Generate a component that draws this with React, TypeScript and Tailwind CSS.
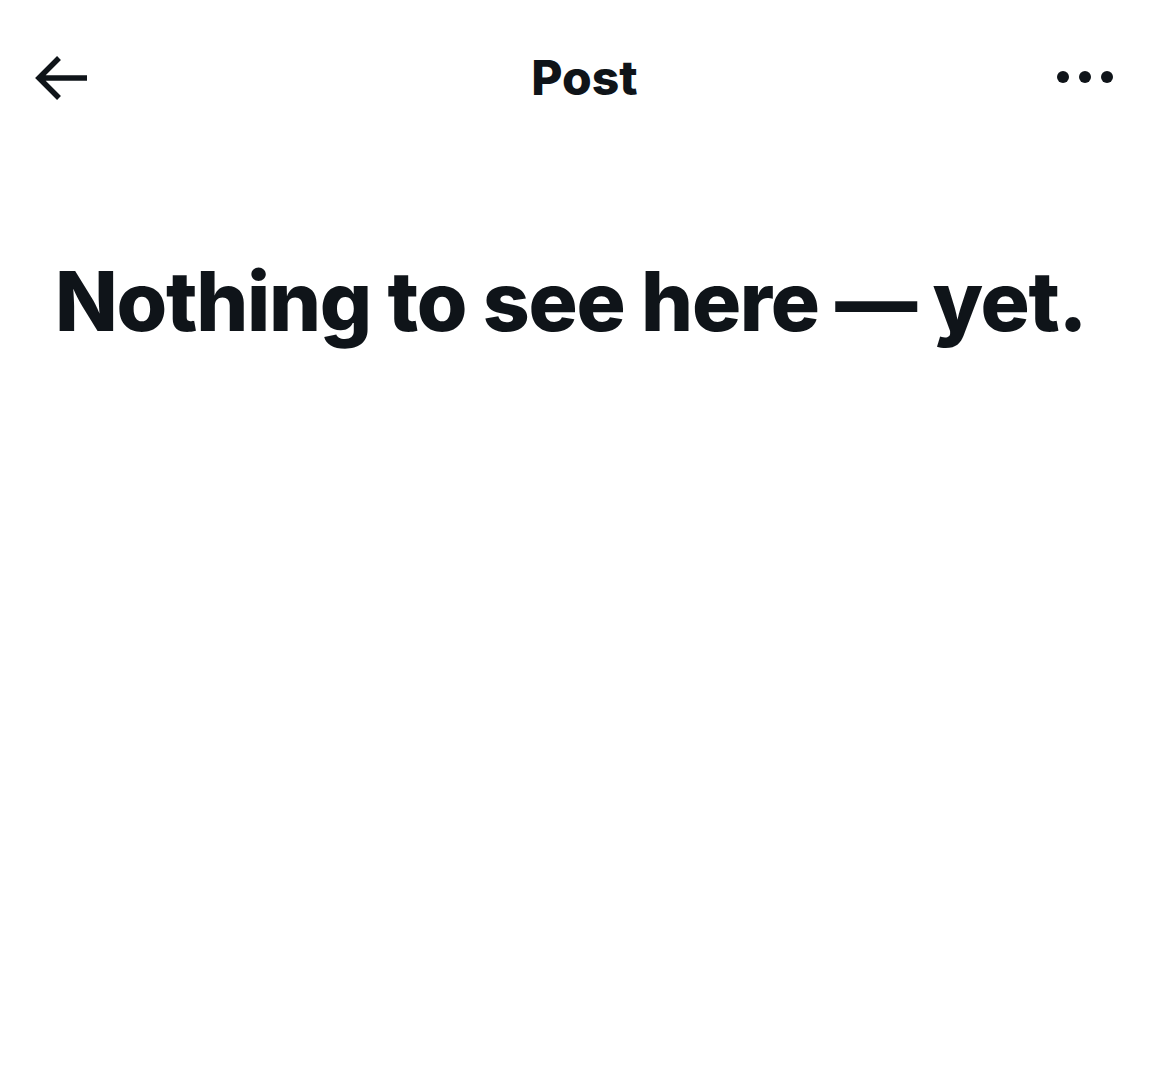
export default function App() {
  return (
    <div className="w-[1169px] h-[1074px] bg-white text-[#0f1419]" style={{ fontFamily: 'Inter, "Liberation Sans", sans-serif' }}>
      <div className="relative flex h-[156px] items-start justify-between px-[34px] pt-[52px]">
        <svg width="54" height="46" viewBox="0 0 54 46" fill="none" className="mt-[3px]">
          <path d="M53 23H5M25 3L5 23l20 20" stroke="#0f1419" strokeWidth="5.5" strokeLinecap="butt" strokeLinejoin="miter" />
        </svg>
        <div className="absolute left-0 right-0 top-[48px] text-center text-[48px] font-extrabold leading-[60px] tracking-[0px]">Post</div>
        <svg width="56" height="14" viewBox="0 0 56 14" className="mt-[18px] mr-[22px]">
          <circle cx="6" cy="7" r="6" fill="#0f1419" />
          <circle cx="28" cy="7" r="6" fill="#0f1419" />
          <circle cx="50" cy="7" r="6" fill="#0f1419" />
        </svg>
      </div>
      <div className="px-[55px] pt-[96px]">
        <h1 className="text-[82px] font-extrabold leading-[100px] tracking-[-1.3px] whitespace-nowrap">Nothing to see here — yet.</h1>
      </div>
    </div>
  );
}
